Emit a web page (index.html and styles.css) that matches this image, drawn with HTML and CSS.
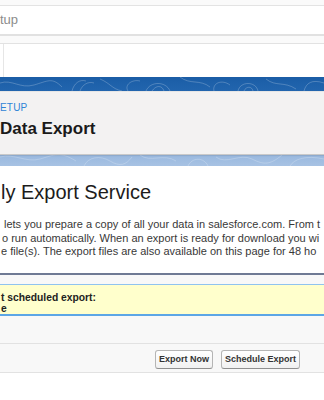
FILE: index.html
```html
<!DOCTYPE html>
<html>
<head>
<meta charset="utf-8">
<link rel="stylesheet" href="styles.css">
</head>
<body>
<div class="global-header">
  <div class="search"><span class="search-text">tup</span></div>
</div>
<div class="nav"><div class="nav-divider"></div></div>
<div class="setup-bg">
  <div class="setup-panel">
    <div class="eyebrow">ETUP</div>
    <div class="page-title">Data Export</div>
  </div>
</div>
<div class="content">
  <h1 class="title">ly Export Service</h1>
  <div class="desc">
    <div class="line l1">lets you prepare a copy of all your data in salesforce.com. From t</div>
    <div class="line l2">o run automatically. When an export is ready for download you wi</div>
    <div class="line l3">e file(s). The export files are also available on this page for 48 ho</div>
  </div>
  <div class="block">
    <div class="block-header"></div>
    <div class="info">
      <div class="info-line">t scheduled export:</div>
      <div class="info-line">e</div>
    </div>
    <div class="spacer"></div>
    <div class="buttons">
      <button class="btn">Export Now</button>
      <button class="btn">Schedule Export</button>
    </div>
  </div>
</div>
</body>
</html>
```
FILE: styles.css
```css
html, body {
  margin: 0;
  padding: 0;
  background: #ffffff;
  overflow: hidden;
  font-family: "Liberation Sans", Arial, sans-serif;
}

.global-header {
  height: 43px;
  background: #fafafa;
  padding-top: 5px;
  box-sizing: border-box;
}

.search {
  height: 28px;
  background: #ffffff;
  border-top: 1px solid #e3e3e3;
  border-bottom: 2px solid #e1e1e1;
  display: flex;
  align-items: center;
}

.search-text {
  font-size: 13px;
  color: #8c8c8c;
  line-height: 28px;
}

.nav {
  height: 33px;
  background: #ffffff;
  border-top: 1px solid #e2e2e2;
  display: flex;
}

.nav-divider {
  margin-left: 3px;
  width: 1px;
  background: #e6e6e6;
}

.setup-bg {
  padding: 14px 0 11px 0;
  background-color: #1d60a9;
  background-image:
    url("data:image/svg+xml,%3Csvg xmlns='http://www.w3.org/2000/svg' width='324' height='89'%3E%3Cg fill='none' stroke='%23ffffff' stroke-opacity='0.22' stroke-width='1'%3E%3Cpath d='M0 6 C 12 2, 20 12, 34 8 S 52 0, 62 10'/%3E%3Cpath d='M72 14 C 74 6, 80 2, 86 4 M 80 14 C 82 8, 88 4, 94 6'/%3E%3Cpath d='M100 2 C 110 6, 112 12, 122 14 M 128 14 C 124 8, 132 2, 140 4'/%3E%3Cpath d='M146 14 C 150 4, 166 4, 170 14 M 152 14 C 156 8, 162 8, 164 14'/%3E%3Cpath d='M180 0 C 190 8, 200 2, 210 10 M 214 14 C 212 6, 222 2, 230 8'/%3E%3Cpath d='M238 14 C 240 4, 256 4, 258 14 M 244 14 C 246 9, 252 9, 253 14'/%3E%3Cpath d='M266 2 C 276 10, 284 4, 296 12 M 304 14 C 306 6, 312 2, 324 6'/%3E%3Cpath d='M0 80 C 14 76, 26 86, 40 82 S 60 74, 76 84'/%3E%3Cpath d='M84 89 C 88 80, 100 78, 110 84 S 126 88, 132 80'/%3E%3Cpath d='M140 78 C 150 86, 164 76, 176 84 M 188 89 C 192 80, 204 80, 208 89'/%3E%3Cpath d='M216 80 C 226 88, 240 76, 252 82 S 270 88, 282 78'/%3E%3Cpath d='M290 89 C 294 82, 306 78, 324 82'/%3E%3C/g%3E%3C/svg%3E"),
    linear-gradient(180deg, #1b5da6 0px, #2265ae 14px, #5d8cc6 45px, #8fb2dc 70px, #a7c2e3 89px);
}

.setup-panel {
  height: 64px;
  box-sizing: border-box;
  background: #f3f2f2;
  border-top: 1px solid #e6e6e6;
  border-bottom: 1px solid #c9c9c9;
  box-shadow: 0 1px 1px rgba(0, 0, 0, 0.08);
  padding-top: 10px;
}

.eyebrow {
  font-size: 10px;
  line-height: 12px;
  color: #2f84d6;
  letter-spacing: 0.2px;
}

.page-title {
  margin-top: 5px;
  font-size: 17px;
  line-height: 20px;
  font-weight: bold;
  color: #1a1a1a;
}

.content {
  background: #ffffff;
}

.title {
  margin: 14px 0 0 1px;
  font-size: 20px;
  line-height: 24px;
  font-weight: normal;
  color: #1c1c1c;
}

.desc {
  margin-top: 14px;
  font-size: 11px;
  line-height: 13.5px;
  color: #383838;
}

.line {
  white-space: nowrap;
}

.l1 { padding-left: 4px; }
.l2 { padding-left: 2px; }
.l3 { padding-left: 1px; }

.block {
  margin-top: 14px;
  border-top: 2px solid #6f7a94;
  background: #f8f8f8;
  border-bottom: 1px solid #e2e2e2;
}

.block-header {
  height: 9px;
}

.info {
  background: #ffffcc;
  border-top: 1px solid #8fc3ef;
  border-bottom: 2px solid #5ca6e6;
  padding: 7px 0 3px 0;
  height: 32px;
  box-sizing: border-box;
}

.info-line {
  font-size: 10.3px;
  line-height: 11px;
  font-weight: bold;
  color: #222222;
  padding-left: 1px;
  white-space: nowrap;
}

.spacer {
  height: 27px;
  border-bottom: 1px solid #e2e2e2;
}

.buttons {
  height: 28px;
  box-sizing: border-box;
  padding: 6px 0 0 155px;
  display: flex;
  gap: 8px;
  align-items: flex-start;
}

.btn {
  height: 19px;
  margin: 0;
  padding: 0 3px;
  font-family: "Liberation Sans", Arial, sans-serif;
  font-size: 9px;
  font-weight: bold;
  color: #333333;
  background: linear-gradient(180deg, #ffffff 0%, #f1f1f1 100%);
  border: 1px solid #b5b5b5;
  border-bottom-color: #8f8f8f;
  border-radius: 3px;
  line-height: 17px;
}
```
